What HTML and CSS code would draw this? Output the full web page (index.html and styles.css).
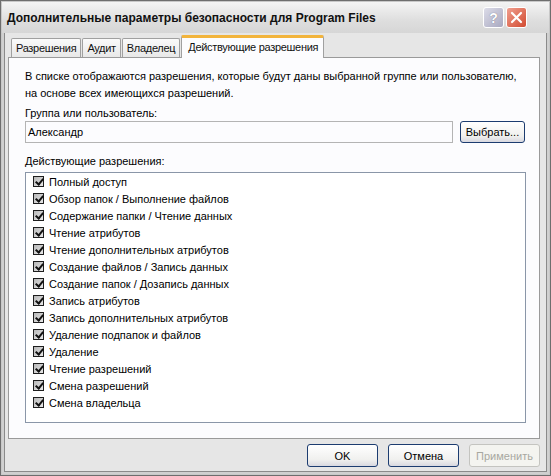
FILE: index.html
```html
<!DOCTYPE html>
<html>
<head>
<meta charset="utf-8">
<link rel="stylesheet" href="styles.css">
</head>
<body>
<div class="window">
  <div class="titlebar">
    <span class="title">Дополнительные параметры безопасности для Program Files</span>
    <div class="tbtns">
      <div class="tbtn help">?</div>
      <div class="tbtn close"><svg width="13" height="13" viewBox="0 0 13 13"><path d="M2 2 L11 11 M11 2 L2 11" stroke="#fff" stroke-width="2.2" stroke-linecap="round"/></svg></div>
    </div>
  </div>
  <div class="body">
    <div class="tabs">
      <div class="tab">Разрешения</div>
      <div class="tab">Аудит</div>
      <div class="tab">Владелец</div>
      <div class="tab active">Действующие разрешения</div>
    </div>
    <div class="panel">
      <p class="desc">В списке отображаются разрешения, которые будут даны выбранной группе или пользователю,<br>на основе всех имеющихся разрешений.</p>
      <div class="label">Группа или пользователь:</div>
      <div class="row">
        <div class="input">Александр</div>
        <div class="btn select">Выбрать...</div>
      </div>
      <div class="label label2">Действующие разрешения:</div>
      <div class="list">
        <div class="item"><span class="cb"></span>Полный доступ</div>
        <div class="item"><span class="cb"></span>Обзор папок / Выполнение файлов</div>
        <div class="item"><span class="cb"></span>Содержание папки / Чтение данных</div>
        <div class="item"><span class="cb"></span>Чтение атрибутов</div>
        <div class="item"><span class="cb"></span>Чтение дополнительных атрибутов</div>
        <div class="item"><span class="cb"></span>Создание файлов / Запись данных</div>
        <div class="item"><span class="cb"></span>Создание папок / Дозапись данных</div>
        <div class="item"><span class="cb"></span>Запись атрибутов</div>
        <div class="item"><span class="cb"></span>Запись дополнительных атрибутов</div>
        <div class="item"><span class="cb"></span>Удаление подпапок и файлов</div>
        <div class="item"><span class="cb"></span>Удаление</div>
        <div class="item"><span class="cb"></span>Чтение разрешений</div>
        <div class="item"><span class="cb"></span>Смена разрешений</div>
        <div class="item"><span class="cb"></span>Смена владельца</div>
      </div>
    </div>
    <div class="buttons">
      <div class="btn">OK</div>
      <div class="btn">Отмена</div>
      <div class="btn disabled">Применить</div>
    </div>
  </div>
</div>
</body>
</html>
```
FILE: styles.css
```css
* { box-sizing: border-box; }
html, body { margin: 0; padding: 0; background: #fff; }
body { font-family: "Liberation Sans", Arial, sans-serif; font-size: 11px; color: #000; }

.window {
  width: 551px;
  height: 476px;
  border: 1px solid #6e6e6e;
  box-shadow: inset 0 0 0 1px #c8c8c8, inset 0 0 0 3px #d0d0d0, inset 0 0 0 4px #8a8a8a;
  background: #e6e6e6;
  display: flex;
  flex-direction: column;
}

.titlebar {
  height: 31px;
  margin: 1px 1px 0 1px;
  background: linear-gradient(#f4f4f4, #dedede 60%, #d6d6d6);
  display: flex;
  align-items: center;
  justify-content: space-between;
  padding: 0 22px 0 5px;
}
.title {
  font-weight: bold;
  font-size: 12px;
  color: #111;
}
.tbtns { display: flex; gap: 2px; }
.tbtn {
  width: 21px;
  height: 21px;
  border-radius: 3px;
  border: 1px solid #fff;
  display: flex;
  align-items: center;
  justify-content: center;
}
.help {
  background: linear-gradient(135deg, #dcdce8, #a8a8c0);
  color: #fff;
  font-weight: bold;
  font-size: 14px;
  text-shadow: 0 0 1px #667;
}
.close {
  background: linear-gradient(135deg, #f0a090, #d24a30);
}

.body {
  flex: 1;
  padding: 2px 10px 0 7px;
  display: flex;
  flex-direction: column;
}

.tabs {
  display: flex;
  align-items: flex-end;
  height: 22px;
  padding-left: 3px;
  gap: 1px;
  position: relative;
  z-index: 1;
}
.tab {
  height: 19px;
  padding: 0 4px;
  border: 1px solid #a0a0a0;
  border-bottom: none;
  border-radius: 2px 2px 0 0;
  background: linear-gradient(#fafafa, #e8e8e8);
  display: flex;
  align-items: center;
  color: #111;
  letter-spacing: -0.3px;
}
.tab.active {
  height: 23px;
  margin-bottom: -1px;
  padding: 0 5px 3px 6px;
  background: #fcfcfe;
  border-top: 3px solid #f2b43c;
  border-color: #a0a0a0;
  border-top-color: #f2b43c;
}

.panel {
  height: 382px;
  border: 1px solid #9a9a9a;
  background: #fcfcfe;
  padding: 10px 13px 0 16px;
  display: flex;
  flex-direction: column;
}
.desc { margin: 0; line-height: 17px; }
.label { margin-top: 4px; line-height: 14px; }
.label2 { margin-top: 11px; }

.row { display: flex; align-items: center; gap: 7px; margin-top: 1px; }
.input {
  width: 428px;
  height: 22px;
  border: 1px solid #b4b4b4;
  padding: 2px 2px;
  line-height: 16px;
}

.btn {
  width: 71px;
  height: 23px;
  border: 1px solid #1c3c70;
  border-radius: 3px;
  background: linear-gradient(#ffffff, #f0f0ee 70%, #d8d8e0);
  display: flex;
  align-items: center;
  justify-content: center;
  color: #000;
}
.select { width: 65px; height: 22px; }
.btn.disabled { color: #a8a8a0; border-color: #c4c4c0; background: #f4f4f0; }

.list {
  margin-top: 4px;
  height: 251px;
  border: 1px solid #8a96a8;
  background: #fff;
  padding: 0 0 0 7px;
}
.item {
  height: 17px;
  display: flex;
  align-items: center;
  gap: 5px;
}
.cb {
  width: 11px;
  height: 11px;
  border: 1px solid #1e1e1e;
  background: linear-gradient(135deg, #b8b8b8, #e8e8e8);
  position: relative;
  flex: none;
}
.cb::after {
  content: "";
  position: absolute;
  left: 3px;
  top: 0px;
  width: 3px;
  height: 6px;
  border: solid #111;
  border-width: 0 2px 2px 0;
  transform: rotate(40deg);
}

.buttons {
  display: flex;
  justify-content: flex-end;
  gap: 10px;
  margin-top: 5px;
}
```
